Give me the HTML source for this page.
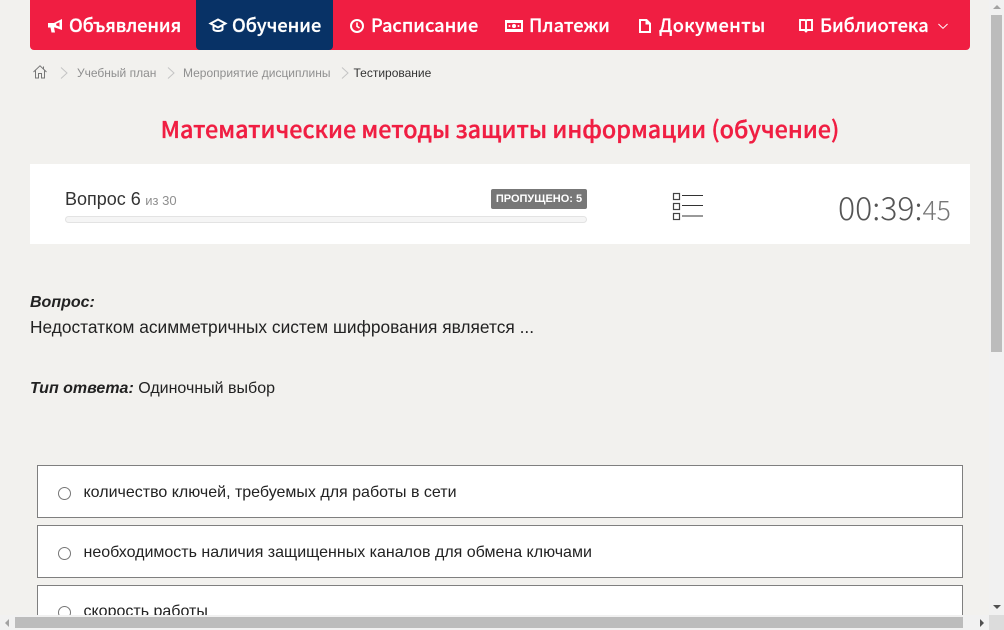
<!DOCTYPE html>
<html lang="ru"><head><meta charset="utf-8"><title>Тестирование</title>
<style>
html,body{margin:0;padding:0;width:1004px;height:630px;overflow:hidden;background:#f2f1ee}
body{position:relative;font-family:"Liberation Sans",sans-serif;color:#222}
.a{position:absolute;white-space:nowrap}
#page{position:absolute;left:0;top:0;width:989px;height:615px;overflow:hidden}
.nav{font-family:"Noto Sans CJK JP","Liberation Sans",sans-serif;font-weight:500;font-size:18.2px;color:#fff;line-height:26px;top:12px;-webkit-text-stroke:.25px #fff}
.bc{font-size:12px;color:#8f8f8f;top:66px;line-height:14px}
.opt{left:37px;width:924px;height:51px;background:#fff;border:1px solid #7f7f7f}
.opt i{position:absolute;left:20px;top:21px;width:11px;height:11px;border:1px solid #767676;border-radius:50%;background:#fff}
.opt span{position:absolute;left:45.5px;top:17px;font-size:16px;line-height:19px;color:#222;white-space:nowrap}
svg{position:absolute;overflow:visible}
</style></head><body>
<div id="page">
<div class="a" style="left:30px;top:0;width:940px;height:50px;background:#f01e42;border-radius:0 0 4px 4px"></div>
<div class="a" style="left:196px;top:0;width:137px;height:50px;background:#083266;border-radius:0 0 4px 4px"></div>

<svg style="left:48px;top:19px" width="15" height="15" viewBox="0 0 15 15"><path d="M0 4h6L14 0v11L7 8.500H6L7 13.500H3.500L2.500 8.500H0z" fill="#fff"/><path d="M8.200 4.800l3.300-1.500v4.300L8.200 6.400z" fill="#f01e42"/></svg>
<div class="a nav" style="left:69px;letter-spacing:-.1px">Объявления</div>

<svg style="left:209px;top:18px" width="18" height="16" viewBox="0 0 18 16"><path d="M9 1.500L16.500 5.500 9 9.500 1.500 5.500z" fill="none" stroke="#fff" stroke-width="2"/><path d="M4.500 8v3.500c1.500 2 7.500 2 9 0V8" fill="none" stroke="#fff" stroke-width="2"/></svg>
<div class="a nav" style="left:232px">Обучение</div>

<svg style="left:349px;top:18px" width="16" height="16" viewBox="0 0 16 16"><circle cx="8" cy="8" r="6" fill="none" stroke="#fff" stroke-width="2"/><path d="M8 4.500V8.300L10.500 10" fill="none" stroke="#fff" stroke-width="1.600"/></svg>
<div class="a nav" style="left:371px">Расписание</div>

<svg style="left:505px;top:20px" width="18" height="12" viewBox="0 0 18 12"><rect x="0" y="0" width="18" height="12" fill="#fff"/><rect x="2" y="3" width="14" height="6" fill="#f01e42"/><circle cx="9" cy="6" r="2" fill="#fff"/><circle cx="4.500" cy="6" r="1" fill="#fff"/><circle cx="13.500" cy="6" r="1" fill="#fff"/></svg>
<div class="a nav" style="left:529px;letter-spacing:.1px">Платежи</div>

<svg style="left:639px;top:19px" width="12" height="14" viewBox="0 0 12 14"><path d="M1 1h6.500L11 4.500V13H1z" fill="none" stroke="#fff" stroke-width="2"/><path d="M6.500 1v4.500H11z" fill="#fff"/></svg>
<div class="a nav" style="left:659px;letter-spacing:.33px">Документы</div>

<svg style="left:799px;top:19px" width="14" height="14" viewBox="0 0 14 14"><path d="M1 1h5L7 2 8 1h5V11H8.500L7 12.500 5.500 11H1zM7 2V12.500" fill="none" stroke="#fff" stroke-width="1.900"/></svg>
<div class="a nav" style="left:820px">Библиотека</div>
<svg style="left:938px;top:23px" width="10" height="7" viewBox="0 0 11 7"><path d="M.5 .8L5.500 5.500 10.500 .8" fill="none" stroke="#fff" stroke-width="1.100"/></svg>

<svg style="left:33px;top:65px" width="14" height="14" viewBox="0 0 14 14"><path d="M.5 7L7 .8 13.500 7M2.500 5.500V13H5.500V8.500H8.500V13H11.500V5.500M10.500 1.500V4" fill="none" stroke="#777" stroke-width="1"/></svg>
<svg style="left:60px;top:67px" width="8" height="12" viewBox="0 0 8 12"><path d="M1 .5L7 6 1 11.500" fill="none" stroke="#c4c4c4"/></svg>
<div class="a bc" style="left:77px">Учебный план</div>
<svg style="left:167px;top:67px" width="8" height="12" viewBox="0 0 8 12"><path d="M1 .5L7 6 1 11.500" fill="none" stroke="#c4c4c4"/></svg>
<div class="a bc" style="left:183px">Мероприятие дисциплины</div>
<svg style="left:341px;top:67px" width="8" height="12" viewBox="0 0 8 12"><path d="M1 .5L7 6 1 11.500" fill="none" stroke="#c4c4c4"/></svg>
<div class="a bc" style="left:353.5px;color:#333">Тестирование</div>

<div class="a" style="left:30px;width:940px;top:111px;text-align:center;font-family:'Noto Sans CJK JP','Liberation Sans',sans-serif;font-weight:500;font-size:23.35px;line-height:34px;color:#f01e42;-webkit-text-stroke:.35px #f01e42">Математические методы защиты информации (обучение)</div>

<div class="a" style="left:30px;top:164px;width:940px;height:80px;background:#fff"></div>
<div class="a" style="left:65px;top:189px;font-size:18px;line-height:21px;color:#333">Вопрос 6<span style="font-size:13px;color:#8f8f8f;margin-left:4.5px">из 30</span></div>
<div class="a" style="left:65px;top:216px;width:520px;height:5px;background:#f5f5f5;border:1px solid #e3e3e3;border-radius:4px"></div>
<div class="a" style="left:491px;top:189px;width:96px;height:20px;background:#777;border-radius:2px;color:#fff;font-weight:700;font-size:11px;line-height:21px;text-align:center">ПРОПУЩЕНО: 5</div>

<svg style="left:672px;top:192px" width="32" height="30" viewBox="0 0 32 30"><g fill="none" stroke="#444" stroke-width="1.200"><rect x="1.500" y="1.500" width="6" height="6"/><rect x="1.500" y="11.500" width="6" height="6"/><rect x="1.500" y="21.500" width="6" height="6"/></g><g stroke="#333" stroke-width="1.100"><path d="M10 3.500H31M10 13.500H31M10 24H31"/></g></svg>

<div class="a" style="left:838px;top:185px;font-family:'Noto Sans CJK JP','Liberation Sans',sans-serif;font-weight:200;font-size:32px;line-height:44px;color:#555">00:39:<span style="font-size:26.5px;color:#777">45</span></div>

<div class="a" style="left:30px;top:294px;font-size:16px;line-height:18px;font-weight:700;font-style:italic;color:#222">Вопрос:</div>
<div class="a" style="left:30px;top:317px;font-size:17.33px;line-height:20px;color:#222">Недостатком асимметричных систем шифрования является ...</div>
<div class="a" style="left:30px;top:380px;font-size:16px;line-height:18px;color:#222"><b><i>Тип ответа:</i></b> Одиночный выбор</div>

<div class="a opt" style="top:465px"><i></i><span>количество ключей, требуемых для работы в сети</span></div>
<div class="a opt" style="top:525px"><i></i><span>необходимость наличия защищенных каналов для обмена ключами</span></div>
<div class="a opt" style="top:585px"><i style="top:20px"></i><span style="top:16px">скорость работы</span></div>
</div>

<div class="a" style="left:989px;top:0;width:15px;height:615px;background:#f1f1f1"></div>
<div class="a" style="left:991px;top:15px;width:11px;height:337px;background:#bcbcbc"></div>
<div class="a" style="left:993px;top:5px;width:0;height:0;border-left:4px solid transparent;border-right:4px solid transparent;border-bottom:4px solid #a3a3a3"></div>
<div class="a" style="left:993px;top:605px;width:0;height:0;border-left:4px solid transparent;border-right:4px solid transparent;border-top:4px solid #505050"></div>
<div class="a" style="left:0;top:615px;width:989px;height:15px;background:#f1f1f1"></div>
<div class="a" style="left:15px;top:617px;width:948px;height:11px;background:#bcbcbc"></div>
<div class="a" style="left:5px;top:619px;width:0;height:0;border-top:4px solid transparent;border-bottom:4px solid transparent;border-right:4px solid #a3a3a3"></div>
<div class="a" style="left:980px;top:619px;width:0;height:0;border-top:4px solid transparent;border-bottom:4px solid transparent;border-left:4px solid #505050"></div>
<div class="a" style="left:989px;top:615px;width:15px;height:15px;background:#dcdcdc"></div>
</body></html>
